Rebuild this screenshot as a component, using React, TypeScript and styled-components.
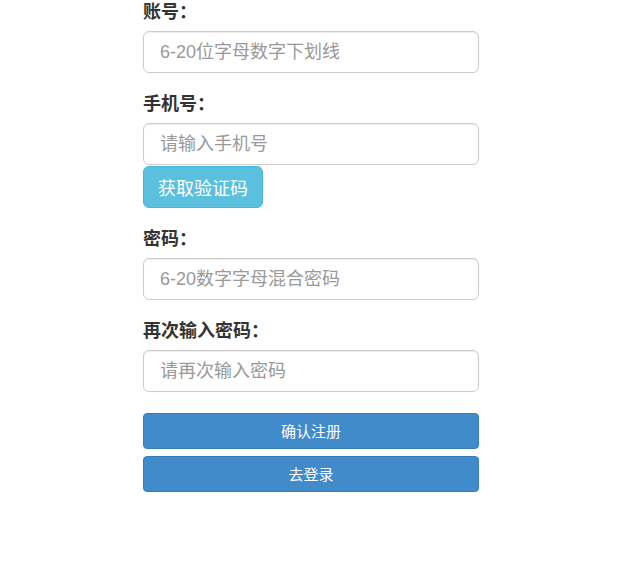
import styled, { createGlobalStyle } from "styled-components";

const GlobalStyle = createGlobalStyle`
  html, body {
    margin: 0;
    padding: 0;
    background: #fff;
  }
  body {
    font-family: "Liberation Sans", Arial, "Noto Sans CJK SC", sans-serif;
    color: #333;
  }
  * {
    box-sizing: border-box;
  }
`;

const Form = styled.form`
  width: 336px;
  margin-left: 143px;
  display: flex;
  flex-direction: column;
`;

const Group = styled.div`
  display: flex;
  flex-direction: column;
  align-items: flex-start;
  & + & {
    margin-top: 19px;
  }
`;

const Label = styled.label`
  font-size: 18px;
  font-weight: bold;
  line-height: 24px;
  margin-bottom: 7px;
  color: #333;
`;

const Input = styled.input`
  width: 100%;
  height: 42px;
  padding: 0 16px;
  font-size: 18px;
  font-family: inherit;
  color: #555;
  background: #fff;
  border: 1px solid #ccc;
  border-radius: 6px;
  box-shadow: inset 0 1px 1px rgba(0, 0, 0, 0.075);
  outline: none;
  &::placeholder {
    color: #999;
  }
`;

const CodeButton = styled.button`
  margin-top: 1px;
  width: 120px;
  height: 42px;
  padding: 0;
  font-size: 18px;
  font-family: inherit;
  color: #fff;
  background: #5bc0de;
  border: 1px solid #46b8da;
  border-radius: 6px;
  cursor: pointer;
`;

const Actions = styled.div`
  display: flex;
  flex-direction: column;
  gap: 7px;
  margin-top: 21px;
`;

const PrimaryButton = styled.button`
  width: 100%;
  height: 36px;
  padding: 0 0 2px;
  font-size: 15px;
  font-family: inherit;
  color: #fff;
  background: #428bca;
  border: 1px solid #357ebd;
  border-radius: 4px;
  cursor: pointer;
`;

const fields = [
  { label: "账号：", placeholder: "6-20位字母数字下划线", type: "text" },
  { label: "手机号：", placeholder: "请输入手机号", type: "text", code: true },
  { label: "密码：", placeholder: "6-20数字字母混合密码", type: "password" },
  { label: "再次输入密码：", placeholder: "请再次输入密码", type: "password" },
];

export default function App() {
  return (
    <>
      <GlobalStyle />
      <Form onSubmit={(e) => e.preventDefault()}>
        {fields.map((f) => (
          <Group key={f.label}>
            <Label>{f.label}</Label>
            <Input type={f.type} placeholder={f.placeholder} />
            {f.code && <CodeButton type="button">获取验证码</CodeButton>}
          </Group>
        ))}
        <Actions>
          <PrimaryButton type="submit">确认注册</PrimaryButton>
          <PrimaryButton type="button">去登录</PrimaryButton>
        </Actions>
      </Form>
    </>
  );
}
